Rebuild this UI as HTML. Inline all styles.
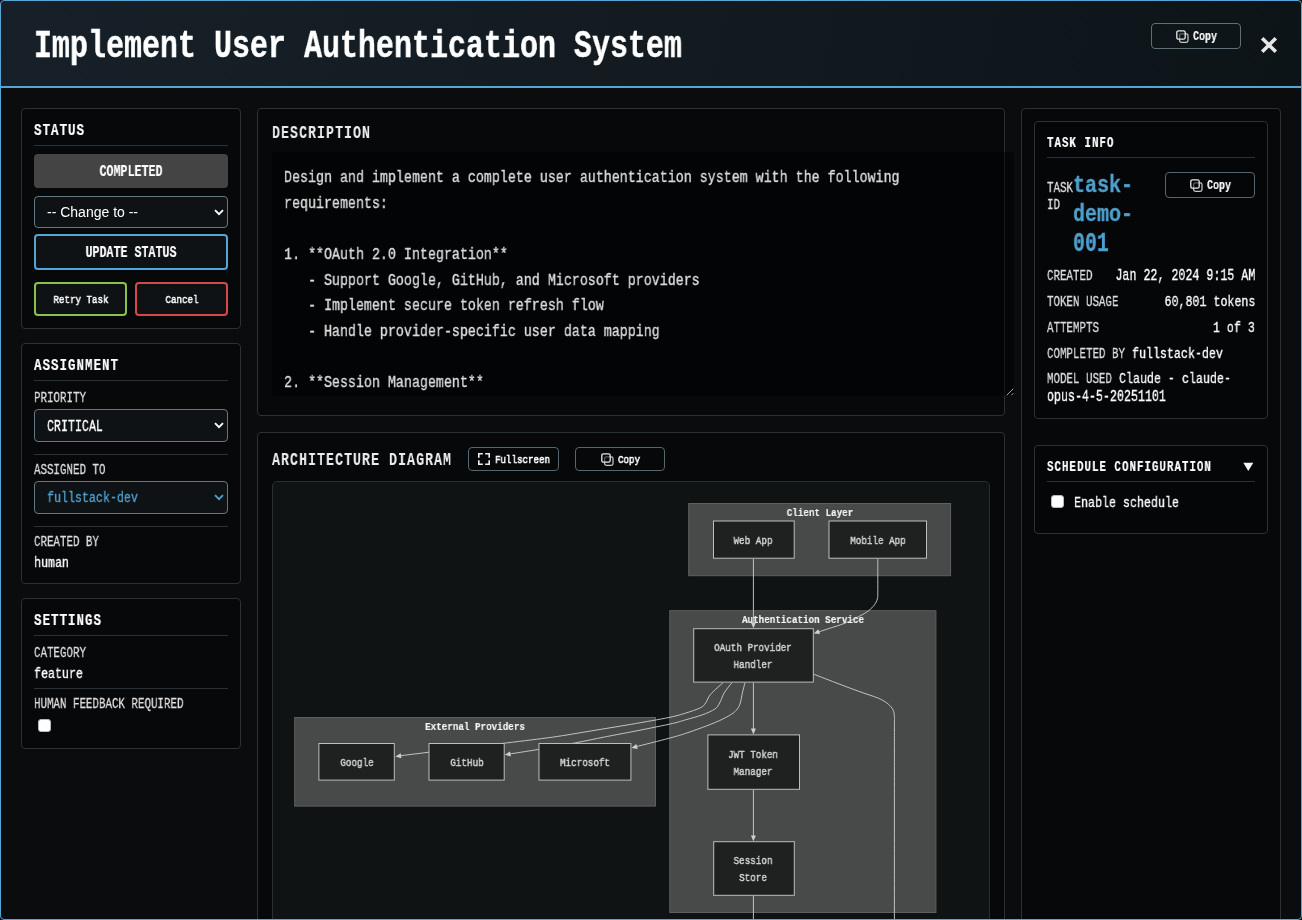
<!DOCTYPE html>
<html lang="en"><head><meta charset="utf-8"><title>Implement User Authentication System</title>
<style>
html,body{margin:0;padding:0;background:#050607;}
body{width:1302px;height:920px;overflow:hidden;position:relative;font-family:"Liberation Mono",monospace;}
#modal{position:absolute;left:0;top:0;width:1302px;height:920px;box-sizing:border-box;background:#0b0c0e;border-radius:4px;overflow:hidden;}
#frame{position:absolute;left:0;top:0;width:1302px;height:920px;box-sizing:border-box;border:1px solid #55a6d4;border-radius:4px;pointer-events:none;}
.b{position:absolute;display:block;}
.t{position:absolute;display:block;white-space:pre;font-family:"Liberation Mono",monospace;will-change:transform;}
.s{position:absolute;will-change:transform;font-family:"Liberation Sans",sans-serif;font-size:14px;line-height:16px;color:#fff;white-space:pre;}
</style></head><body>
<div id="modal">
<div class="b" style="left:1px;top:1px;width:1300px;height:85px;background:linear-gradient(100deg,#172028 0%,#131b21 50%,#0d1418 100%);border-radius:3px 3px 0 0;"></div>
<div class="b" style="left:1px;top:86px;width:1300px;height:2px;background:#55a6d4;"></div>
<span class="t" style="font-size:39.24px;line-height:45px;height:45px;top:24px;color:#fff;font-weight:700;-webkit-text-stroke:0.45px #fff;left:34.00px;transform:scaleX(0.7644);transform-origin:0 0;">Implement User Authentication System</span>
<div class="b" style="left:1151px;top:23px;width:90px;height:26px;border:1px solid #5f6f78;border-radius:4px;box-sizing:border-box;"></div>
<svg class="b" style="left:1176px;top:30px" width="13" height="13" viewBox="0 0 13 13"><rect x="3.6" y="3.9" width="8.4" height="8.4" rx="1.7" fill="none" stroke="#e8e8e8" stroke-width="1.25" opacity=".85"/><rect x="0.8" y="0.8" width="8.4" height="8.4" rx="1.7" fill="#0f171b" fill-opacity=".55" stroke="#e8e8e8" stroke-width="1.3"/></svg>
<span class="t" style="font-size:12.36px;line-height:14px;height:14px;top:30px;color:#fff;font-weight:700;-webkit-text-stroke:0.17px #fff;left:1193.00px;transform:scaleX(0.8089);transform-origin:0 0;">Copy</span>
<svg class="b" style="left:1260px;top:36px" width="18" height="18" viewBox="0 0 18 18"><path d="M2.2 2.2 L15.8 15.8 M15.8 2.2 L2.2 15.8" stroke="#e6e6e6" stroke-width="3.6"/></svg>
<div class="b" style="left:21px;top:108px;width:220px;height:221px;background:#07080a;border:1px solid #293237;border-radius:4px;box-sizing:border-box;"></div>
<span class="t" style="font-size:16.74px;line-height:19px;height:19px;top:121px;color:#fff;font-weight:700;-webkit-text-stroke:0.21px #fff;letter-spacing:1.34px;left:34.00px;transform:scaleX(0.7466);transform-origin:0 0;">STATUS</span>
<div class="b" style="left:34px;top:145px;width:194px;height:1px;background:#293237"></div>
<div class="b" style="left:34px;top:154px;width:194px;height:34px;background:#444;border-radius:4px;"></div>
<span class="t" style="font-size:15.62px;line-height:18px;height:18px;top:163px;color:#fff;font-weight:700;-webkit-text-stroke:0.19px #fff;left:131.00px;transform:translateX(-50%) scaleX(0.7466);transform-origin:50% 0;">COMPLETED</span>
<div class="b" style="left:34px;top:196px;width:194px;height:32px;box-sizing:border-box;border:1px solid #66787f;border-radius:4px;background:#0e1214;"></div>
<span class="s" style="left:47px;top:204px;">-- Change to --</span>
<svg class="b" style="left:214px;top:209px" width="10" height="7" viewBox="0 0 10 7"><path d="M1 1.2 L5 5.2 L9 1.2" fill="none" stroke="#fff" stroke-width="1.9"/></svg>
<div class="b" style="left:34px;top:234px;width:194px;height:36px;box-sizing:border-box;border:2px solid #55a6d4;border-radius:4px;background:#0e1214;"></div>
<span class="t" style="font-size:15.62px;line-height:18px;height:18px;top:244px;color:#fff;font-weight:700;-webkit-text-stroke:0.19px #fff;left:131.00px;transform:translateX(-50%) scaleX(0.7466);transform-origin:50% 0;">UPDATE STATUS</span>
<div class="b" style="left:34px;top:282px;width:93px;height:34px;box-sizing:border-box;border:2px solid #8bc34a;border-radius:4px;background:#0e1214;"></div>
<span class="t" style="font-size:11.33px;line-height:12px;height:12px;top:294px;color:#fff;font-weight:400;-webkit-text-stroke:0.50px #fff;left:80.50px;transform:translateX(-50%) scaleX(0.8089);transform-origin:50% 0;">Retry Task</span>
<div class="b" style="left:135px;top:282px;width:93px;height:34px;box-sizing:border-box;border:2px solid #d9474c;border-radius:4px;background:#0e1214;"></div>
<span class="t" style="font-size:11.33px;line-height:12px;height:12px;top:294px;color:#fff;font-weight:400;-webkit-text-stroke:0.50px #fff;left:181.50px;transform:translateX(-50%) scaleX(0.8089);transform-origin:50% 0;">Cancel</span>
<div class="b" style="left:21px;top:343px;width:220px;height:241px;background:#07080a;border:1px solid #293237;border-radius:4px;box-sizing:border-box;"></div>
<span class="t" style="font-size:16.74px;line-height:19px;height:19px;top:356px;color:#fff;font-weight:700;-webkit-text-stroke:0.21px #fff;letter-spacing:1.34px;left:34.00px;transform:scaleX(0.7466);transform-origin:0 0;">ASSIGNMENT</span>
<div class="b" style="left:34px;top:380px;width:194px;height:1px;background:#293237"></div>
<span class="t" style="font-size:14.51px;line-height:16px;height:16px;top:390px;color:#dedede;font-weight:400;-webkit-text-stroke:0.28px #dedede;left:34.00px;transform:scaleX(0.7466);transform-origin:0 0;">PRIORITY</span>
<div class="b" style="left:34px;top:409px;width:194px;height:33px;box-sizing:border-box;border:1px solid #66787f;border-radius:4px;background:#0e1214;"></div>
<span class="t" style="font-size:15.62px;line-height:18px;height:18px;top:418px;color:#fff;font-weight:400;-webkit-text-stroke:0.31px #fff;left:47.00px;transform:scaleX(0.7466);transform-origin:0 0;">CRITICAL</span>
<svg class="b" style="left:214px;top:422px" width="10" height="7" viewBox="0 0 10 7"><path d="M1 1.2 L5 5.2 L9 1.2" fill="none" stroke="#fff" stroke-width="1.9"/></svg>
<div class="b" style="left:34px;top:454px;width:194px;height:1px;background:#293237"></div>
<span class="t" style="font-size:14.51px;line-height:16px;height:16px;top:462px;color:#dedede;font-weight:400;-webkit-text-stroke:0.28px #dedede;left:34.00px;transform:scaleX(0.7466);transform-origin:0 0;">ASSIGNED TO</span>
<div class="b" style="left:34px;top:481px;width:194px;height:33px;box-sizing:border-box;border:1px solid #66787f;border-radius:4px;background:#0e1214;"></div>
<span class="t" style="font-size:14.42px;line-height:16px;height:16px;top:490px;color:#4f9fcc;font-weight:400;-webkit-text-stroke:0.31px #4f9fcc;left:47.00px;transform:scaleX(0.8089);transform-origin:0 0;">fullstack-dev</span>
<svg class="b" style="left:214px;top:494px" width="10" height="7" viewBox="0 0 10 7"><path d="M1 1.2 L5 5.2 L9 1.2" fill="none" stroke="#4f9fcc" stroke-width="1.9"/></svg>
<div class="b" style="left:34px;top:526px;width:194px;height:1px;background:#293237"></div>
<span class="t" style="font-size:14.51px;line-height:16px;height:16px;top:534px;color:#dedede;font-weight:400;-webkit-text-stroke:0.28px #dedede;left:34.00px;transform:scaleX(0.7466);transform-origin:0 0;">CREATED BY</span>
<span class="t" style="font-size:14.42px;line-height:16px;height:16px;top:555px;color:#fff;font-weight:400;-webkit-text-stroke:0.31px #fff;left:34.00px;transform:scaleX(0.8089);transform-origin:0 0;">human</span>
<div class="b" style="left:21px;top:598px;width:220px;height:151px;background:#07080a;border:1px solid #293237;border-radius:4px;box-sizing:border-box;"></div>
<span class="t" style="font-size:16.74px;line-height:19px;height:19px;top:611px;color:#fff;font-weight:700;-webkit-text-stroke:0.21px #fff;letter-spacing:1.34px;left:34.00px;transform:scaleX(0.7466);transform-origin:0 0;">SETTINGS</span>
<div class="b" style="left:34px;top:635px;width:194px;height:1px;background:#293237"></div>
<span class="t" style="font-size:14.51px;line-height:16px;height:16px;top:645px;color:#dedede;font-weight:400;-webkit-text-stroke:0.28px #dedede;left:34.00px;transform:scaleX(0.7466);transform-origin:0 0;">CATEGORY</span>
<span class="t" style="font-size:14.42px;line-height:16px;height:16px;top:666px;color:#fff;font-weight:400;-webkit-text-stroke:0.31px #fff;left:34.00px;transform:scaleX(0.8089);transform-origin:0 0;">feature</span>
<div class="b" style="left:34px;top:688px;width:194px;height:1px;background:#293237"></div>
<span class="t" style="font-size:14.51px;line-height:16px;height:16px;top:696px;color:#dedede;font-weight:400;-webkit-text-stroke:0.28px #dedede;left:34.00px;transform:scaleX(0.7466);transform-origin:0 0;">HUMAN FEEDBACK REQUIRED</span>
<div class="b" style="left:38px;top:719px;width:13px;height:13px;box-sizing:border-box;background:#fff;border:1px solid #b9b9b9;border-radius:3px;"></div>
<div class="b" style="left:257px;top:108px;width:748px;height:308px;background:#07080a;border:1px solid #293237;border-radius:4px;box-sizing:border-box;"></div>
<span class="t" style="font-size:17.86px;line-height:20px;height:20px;top:123px;color:#ececec;font-weight:700;-webkit-text-stroke:0.05px #ececec;letter-spacing:1.34px;left:272.00px;transform:scaleX(0.7466);transform-origin:0 0;">DESCRIPTION</span>
<div class="b" style="left:272px;top:152px;width:742px;height:244px;background:rgba(0,0,0,.5);border-radius:3px;"></div>
<span class="t" style="font-size:16.48px;line-height:19px;height:19px;top:168px;color:#dcdcdc;font-weight:400;-webkit-text-stroke:0.35px #dcdcdc;left:284.00px;transform:scaleX(0.8089);transform-origin:0 0;white-space:pre;">Design and implement a complete user authentication system with the following</span>
<span class="t" style="font-size:16.48px;line-height:19px;height:19px;top:194px;color:#dcdcdc;font-weight:400;-webkit-text-stroke:0.35px #dcdcdc;left:284.00px;transform:scaleX(0.8089);transform-origin:0 0;white-space:pre;">requirements:</span>
<span class="t" style="font-size:16.48px;line-height:19px;height:19px;top:245px;color:#dcdcdc;font-weight:400;-webkit-text-stroke:0.35px #dcdcdc;left:284.00px;transform:scaleX(0.8089);transform-origin:0 0;white-space:pre;">1. **OAuth 2.0 Integration**</span>
<span class="t" style="font-size:16.48px;line-height:19px;height:19px;top:271px;color:#dcdcdc;font-weight:400;-webkit-text-stroke:0.35px #dcdcdc;left:284.00px;transform:scaleX(0.8089);transform-origin:0 0;white-space:pre;">   - Support Google, GitHub, and Microsoft providers</span>
<span class="t" style="font-size:16.48px;line-height:19px;height:19px;top:296px;color:#dcdcdc;font-weight:400;-webkit-text-stroke:0.35px #dcdcdc;left:284.00px;transform:scaleX(0.8089);transform-origin:0 0;white-space:pre;">   - Implement secure token refresh flow</span>
<span class="t" style="font-size:16.48px;line-height:19px;height:19px;top:322px;color:#dcdcdc;font-weight:400;-webkit-text-stroke:0.35px #dcdcdc;left:284.00px;transform:scaleX(0.8089);transform-origin:0 0;white-space:pre;">   - Handle provider-specific user data mapping</span>
<span class="t" style="font-size:16.48px;line-height:19px;height:19px;top:373px;color:#dcdcdc;font-weight:400;-webkit-text-stroke:0.35px #dcdcdc;left:284.00px;transform:scaleX(0.8089);transform-origin:0 0;white-space:pre;">2. **Session Management**</span>
<svg class="b" style="left:1004px;top:386px" width="10" height="10" viewBox="0 0 10 10"><path d="M2.7 9.3 L9.3 2.7 M7.3 9.3 L9.3 7.3" stroke="#b4b4b4" stroke-width="0.9"/></svg>
<div class="b" style="left:257px;top:432px;width:748px;height:600px;background:#07080a;border:1px solid #293237;border-radius:4px;box-sizing:border-box;"></div>
<span class="t" style="font-size:17.86px;line-height:20px;height:20px;top:450px;color:#ececec;font-weight:700;-webkit-text-stroke:0.05px #ececec;letter-spacing:1.34px;left:272.00px;transform:scaleX(0.7466);transform-origin:0 0;">ARCHITECTURE DIAGRAM</span>
<div class="b" style="left:468px;top:447px;width:91px;height:24px;box-sizing:border-box;border:1px solid #56666e;border-radius:4px;background:#07080a;"></div>
<svg class="b" style="left:478px;top:453px" width="12" height="12" viewBox="0 0 12 12"><path d="M0.8 4.8 V0.8 H4.8 M7.2 0.8 H11.2 V4.8 M11.2 7.2 V11.2 H7.2 M4.8 11.2 H0.8 V7.2" fill="none" stroke="#f0f0f0" stroke-width="1.6"/></svg>
<span class="t" style="font-size:11.33px;line-height:12px;height:12px;top:454px;color:#fff;font-weight:400;-webkit-text-stroke:0.60px #fff;left:495.00px;transform:scaleX(0.8089);transform-origin:0 0;">Fullscreen</span>
<div class="b" style="left:575px;top:447px;width:90px;height:24px;box-sizing:border-box;border:1px solid #56666e;border-radius:4px;background:#07080a;"></div>
<svg class="b" style="left:601px;top:453px" width="13" height="13" viewBox="0 0 13 13"><rect x="3.6" y="3.9" width="8.4" height="8.4" rx="1.7" fill="none" stroke="#e8e8e8" stroke-width="1.25" opacity=".85"/><rect x="0.8" y="0.8" width="8.4" height="8.4" rx="1.7" fill="#07080a" fill-opacity=".55" stroke="#e8e8e8" stroke-width="1.3"/></svg>
<span class="t" style="font-size:11.33px;line-height:12px;height:12px;top:454px;color:#fff;font-weight:400;-webkit-text-stroke:0.60px #fff;left:617.50px;transform:scaleX(0.8089);transform-origin:0 0;">Copy</span>
<div class="b" style="left:272px;top:481px;width:718px;height:500px;box-sizing:border-box;background:#0f1314;border:1px solid #283035;border-radius:5px;"></div>
<div class="b" style="left:1021px;top:108px;width:260px;height:900px;background:#07080a;border:1px solid #293237;border-radius:4px;box-sizing:border-box;"></div>
<div class="b" style="left:1034px;top:121px;width:234px;height:298px;background:#07080a;border:1px solid #293237;border-radius:4px;box-sizing:border-box;background:#050607;"></div>
<span class="t" style="font-size:14.51px;line-height:16px;height:16px;top:135px;color:#fff;font-weight:700;-webkit-text-stroke:0.18px #fff;letter-spacing:1.34px;left:1047.00px;transform:scaleX(0.7466);transform-origin:0 0;">TASK INFO</span>
<div class="b" style="left:1047px;top:157px;width:208px;height:1px;background:#293237"></div>
<span class="t" style="font-size:14.51px;line-height:16px;height:16px;top:180px;color:#dedede;font-weight:400;-webkit-text-stroke:0.28px #dedede;left:1047.00px;transform:scaleX(0.7466);transform-origin:0 0;">TASK</span>
<span class="t" style="font-size:14.51px;line-height:16px;height:16px;top:197px;color:#dedede;font-weight:400;-webkit-text-stroke:0.28px #dedede;left:1047.00px;transform:scaleX(0.7466);transform-origin:0 0;">ID</span>
<span class="t" style="font-size:24.72px;line-height:28px;height:28px;top:171px;color:#4f9fcc;font-weight:700;-webkit-text-stroke:0.33px #4f9fcc;left:1073.00px;transform:scaleX(0.8089);transform-origin:0 0;">task-</span>
<span class="t" style="font-size:24.72px;line-height:28px;height:28px;top:200px;color:#4f9fcc;font-weight:700;-webkit-text-stroke:0.33px #4f9fcc;left:1073.00px;transform:scaleX(0.8089);transform-origin:0 0;">demo-</span>
<span class="t" style="font-size:26.78px;line-height:30px;height:30px;top:229px;color:#4f9fcc;font-weight:700;-webkit-text-stroke:0.33px #4f9fcc;left:1073.00px;transform:scaleX(0.7466);transform-origin:0 0;">001</span>
<div class="b" style="left:1165px;top:172px;width:90px;height:26px;box-sizing:border-box;border:1px solid #56666e;border-radius:4px;background:#07080a;background:#050607;"></div>
<svg class="b" style="left:1190px;top:179px" width="13" height="13" viewBox="0 0 13 13"><rect x="3.6" y="3.9" width="8.4" height="8.4" rx="1.7" fill="none" stroke="#e8e8e8" stroke-width="1.25" opacity=".85"/><rect x="0.8" y="0.8" width="8.4" height="8.4" rx="1.7" fill="#050607" fill-opacity=".55" stroke="#e8e8e8" stroke-width="1.3"/></svg>
<span class="t" style="font-size:12.36px;line-height:14px;height:14px;top:179px;color:#fff;font-weight:700;-webkit-text-stroke:0.17px #fff;left:1207.00px;transform:scaleX(0.8089);transform-origin:0 0;">Copy</span>
<span class="t" style="font-size:14.51px;line-height:16px;height:16px;top:268px;color:#dedede;font-weight:400;-webkit-text-stroke:0.28px #dedede;left:1047.00px;transform:scaleX(0.7466);transform-origin:0 0;">CREATED</span>
<span class="t" style="font-size:15.62px;line-height:18px;height:18px;top:267px;color:#fff;font-weight:400;-webkit-text-stroke:0.31px #fff;right:47.00px;transform:scaleX(0.7466);transform-origin:100% 0;">Jan 22, 2024 9:15 AM</span>
<span class="t" style="font-size:14.51px;line-height:16px;height:16px;top:294px;color:#dedede;font-weight:400;-webkit-text-stroke:0.28px #dedede;left:1047.00px;transform:scaleX(0.7466);transform-origin:0 0;">TOKEN USAGE</span>
<span class="t" style="font-size:14.42px;line-height:16px;height:16px;top:294px;color:#fff;font-weight:400;-webkit-text-stroke:0.31px #fff;right:47.00px;transform:scaleX(0.8089);transform-origin:100% 0;">60,801 tokens</span>
<span class="t" style="font-size:14.51px;line-height:16px;height:16px;top:320px;color:#dedede;font-weight:400;-webkit-text-stroke:0.28px #dedede;left:1047.00px;transform:scaleX(0.7466);transform-origin:0 0;">ATTEMPTS</span>
<span class="t" style="font-size:14.42px;line-height:16px;height:16px;top:320px;color:#fff;font-weight:400;-webkit-text-stroke:0.31px #fff;right:47.00px;transform:scaleX(0.8089);transform-origin:100% 0;">1 of 3</span>
<span class="t" style="font-size:14.51px;line-height:16px;height:16px;top:346px;color:#dedede;font-weight:400;-webkit-text-stroke:0.28px #dedede;left:1047.00px;transform:scaleX(0.7466);transform-origin:0 0;">COMPLETED BY</span>
<span class="t" style="font-size:14.42px;line-height:16px;height:16px;top:346px;color:#fff;font-weight:400;-webkit-text-stroke:0.31px #fff;left:1132.00px;transform:scaleX(0.8089);transform-origin:0 0;">fullstack-dev</span>
<span class="t" style="font-size:14.51px;line-height:16px;height:16px;top:371px;color:#dedede;font-weight:400;-webkit-text-stroke:0.28px #dedede;left:1047.00px;transform:scaleX(0.7466);transform-origin:0 0;">MODEL USED</span>
<span class="t" style="font-size:14.42px;line-height:16px;height:16px;top:371px;color:#fff;font-weight:400;-webkit-text-stroke:0.31px #fff;left:1119.00px;transform:scaleX(0.8089);transform-origin:0 0;">Claude - claude-</span>
<span class="t" style="font-size:15.62px;line-height:18px;height:18px;top:388px;color:#fff;font-weight:400;-webkit-text-stroke:0.31px #fff;left:1047.00px;transform:scaleX(0.7466);transform-origin:0 0;">opus-4-5-20251101</span>
<div class="b" style="left:1034px;top:445px;width:234px;height:89px;background:#07080a;border:1px solid #293237;border-radius:4px;box-sizing:border-box;background:#050607;"></div>
<span class="t" style="font-size:14.51px;line-height:16px;height:16px;top:459px;color:#fff;font-weight:700;-webkit-text-stroke:0.18px #fff;letter-spacing:1.34px;left:1047.00px;transform:scaleX(0.7466);transform-origin:0 0;">SCHEDULE CONFIGURATION</span>
<svg class="b" style="left:1243px;top:462px" width="11" height="10" viewBox="0 0 11 10"><path d="M0.3 0.8 H10.3 L5.3 9 Z" fill="#f4f4f4"/></svg>
<div class="b" style="left:1047px;top:481px;width:208px;height:1px;background:#293237"></div>
<div class="b" style="left:1051px;top:495px;width:13px;height:13px;box-sizing:border-box;background:#fff;border:1px solid #b9b9b9;border-radius:3px;"></div>
<span class="t" style="font-size:14.42px;line-height:16px;height:16px;top:495px;color:#fff;font-weight:400;-webkit-text-stroke:0.31px #fff;left:1074.00px;transform:scaleX(0.8089);transform-origin:0 0;">Enable schedule</span>
<svg class="b" style="left:273px;top:482px;" width="716" height="438" viewBox="273 482 716 438"><rect x="688.7" y="503.5" width="261.9" height="72.2" fill="#484a49" stroke="#5e605f" stroke-width="1"/><rect x="669.8" y="610.7" width="266.1" height="301.8" fill="#484a49" stroke="#5e605f" stroke-width="1"/><rect x="294.7" y="717.5" width="360.8" height="88.6" fill="#484a49" stroke="#5e605f" stroke-width="1"/><path d="M753.4,558.7 L753.4,626" fill="none" stroke="#cfcfcf" stroke-width="0.9"/><path d="M877.8,558.4 C877.8,561.2 877.8,569.4 877.8,575.0 C877.8,580.6 877.9,588.2 877.8,592.2 C877.7,596.2 877.9,596.9 877.3,599.0 C876.7,601.1 875.9,602.9 874.4,604.9 C872.9,606.9 871.1,608.8 868.5,610.8 C865.9,612.8 862.8,614.5 858.7,616.6 C854.6,618.7 848.9,621.5 844.0,623.5 C839.1,625.5 833.6,627.0 829.4,628.4 C825.1,629.8 820.3,631.4 818.5,632.0" fill="none" stroke="#cfcfcf" stroke-width="0.9"/><path d="M813.6,674.2 C817.9,675.8 831.6,681.1 839.1,684.0 C846.6,686.9 852.2,688.9 858.7,691.3 C865.2,693.7 873.4,696.1 878.3,698.2 C883.2,700.3 885.6,702.0 888.1,704.0 C890.6,706.0 892.0,707.8 893.0,709.9 C894.0,712.0 894.2,713.4 894.4,716.8 C894.6,720.1 894.4,716.1 894.4,730.0 C894.4,743.9 894.4,765.0 894.4,800.0 C894.4,835.0 894.4,916.7 894.4,940.0" fill="none" stroke="#cfcfcf" stroke-width="0.9"/><path d="M753.4,682.6 L753.4,732" fill="none" stroke="#cfcfcf" stroke-width="0.9"/><path d="M753.4,789.8 L753.4,839" fill="none" stroke="#cfcfcf" stroke-width="0.9"/><path d="M753.4,895.8 L753.4,940" fill="none" stroke="#cfcfcf" stroke-width="0.9"/><path d="M722.9,682.8 C720.9,684.7 713.6,690.8 710.7,694.2 C707.8,697.6 707.3,700.8 705.6,703.0 C703.9,705.2 704.0,706.0 700.6,707.7 C697.2,709.4 690.5,711.6 685.3,713.2 C680.1,714.8 678.4,715.5 669.3,717.4 C660.2,719.3 643.6,722.1 630.6,724.4 C617.6,726.6 604.5,728.8 591.4,730.9 C578.3,733.0 566.6,735.2 552.2,737.2 C537.8,739.2 525.7,740.6 505.2,743.1 C484.7,745.6 446.7,750.1 429.2,752.2 C411.7,754.3 404.9,755.2 400.0,755.8" fill="none" stroke="#cfcfcf" stroke-width="0.9"/><path d="M731.8,682.8 C730.5,684.5 726.2,689.5 724.2,692.9 C722.2,696.3 721.2,700.3 719.6,703.0 C718.0,705.7 717.8,707.0 714.9,709.0 C712.0,711.0 707.1,713.1 702.2,714.9 C697.3,716.7 690.8,718.3 685.3,719.9 C679.8,721.5 678.4,722.2 669.3,724.2 C660.2,726.2 641.4,729.9 630.6,732.0 C619.8,734.1 613.6,735.2 604.5,737.0 C595.4,738.8 586.7,740.7 575.7,742.8 C564.7,744.9 549.5,747.5 538.5,749.4 C527.5,751.3 514.3,753.2 509.5,754.0" fill="none" stroke="#cfcfcf" stroke-width="0.9"/><path d="M744.9,682.8 C744.5,684.5 743.2,689.5 742.4,692.9 C741.6,696.3 741.1,700.3 740.3,703.0 C739.4,705.7 738.7,707.2 737.3,709.0 C735.9,710.8 734.8,712.0 731.8,714.0 C728.8,716.0 724.0,718.5 719.1,720.8 C714.2,723.0 707.8,725.4 702.2,727.5 C696.6,729.6 690.8,731.7 685.3,733.5 C679.8,735.3 677.5,736.0 669.3,738.2 C661.1,740.4 641.5,745.3 636.0,746.7" fill="none" stroke="#cfcfcf" stroke-width="0.9"/><path d="M753.4,628.3 L750.9,622.5 L755.9,622.5 Z" fill="#cfcfcf"/><path d="M813.7,633.4 L818.4,629.2 L820.0,634.0 Z" fill="#cfcfcf"/><path d="M753.4,734.4 L750.9,728.6 L755.9,728.6 Z" fill="#cfcfcf"/><path d="M753.4,841.2 L750.9,835.4 L755.9,835.4 Z" fill="#cfcfcf"/><path d="M395.3,756.4 L400.8,753.2 L401.4,758.2 Z" fill="#cfcfcf"/><path d="M504.8,754.8 L510.1,751.4 L510.9,756.4 Z" fill="#cfcfcf"/><path d="M631.4,748.0 L636.3,744.0 L637.7,748.9 Z" fill="#cfcfcf"/><rect x="713.5" y="521.0" width="80.7" height="37.2" fill="#1f2120" stroke="#bdbdbd" stroke-width="1"/><rect x="829.0" y="521.0" width="97.5" height="37.2" fill="#1f2120" stroke="#bdbdbd" stroke-width="1"/><rect x="693.7" y="628.7" width="119.6" height="53.4" fill="#1f2120" stroke="#bdbdbd" stroke-width="1"/><rect x="707.9" y="734.9" width="91.6" height="54.4" fill="#1f2120" stroke="#bdbdbd" stroke-width="1"/><rect x="713.7" y="841.7" width="80.6" height="53.6" fill="#1f2120" stroke="#bdbdbd" stroke-width="1"/><rect x="318.9" y="743.5" width="75.4" height="36.6" fill="#1f2120" stroke="#bdbdbd" stroke-width="1"/><rect x="429.0" y="743.5" width="75.2" height="36.6" fill="#1f2120" stroke="#bdbdbd" stroke-width="1"/><rect x="539.0" y="743.5" width="91.9" height="36.6" fill="#1f2120" stroke="#bdbdbd" stroke-width="1"/></svg>
<span class="t" style="font-size:11.43px;line-height:13px;height:13px;top:506px;color:#f4f6f5;font-weight:700;-webkit-text-stroke:0.15px #f4f6f5;left:819.50px;transform:translateX(-50%) scaleX(0.8089);transform-origin:50% 0;">Client Layer</span>
<span class="t" style="font-size:11.43px;line-height:13px;height:13px;top:613px;color:#f4f6f5;font-weight:700;-webkit-text-stroke:0.15px #f4f6f5;left:803.00px;transform:translateX(-50%) scaleX(0.8089);transform-origin:50% 0;">Authentication Service</span>
<span class="t" style="font-size:11.43px;line-height:13px;height:13px;top:720px;color:#f4f6f5;font-weight:700;-webkit-text-stroke:0.15px #f4f6f5;left:475.00px;transform:translateX(-50%) scaleX(0.8089);transform-origin:50% 0;">External Providers</span>
<span class="t" style="font-size:11.43px;line-height:13px;height:13px;top:534px;color:#d4d4d4;font-weight:400;-webkit-text-stroke:0.45px #d4d4d4;left:753.40px;transform:translateX(-50%) scaleX(0.8089);transform-origin:50% 0;">Web App</span>
<span class="t" style="font-size:11.43px;line-height:13px;height:13px;top:534px;color:#d4d4d4;font-weight:400;-webkit-text-stroke:0.45px #d4d4d4;left:877.70px;transform:translateX(-50%) scaleX(0.8089);transform-origin:50% 0;">Mobile App</span>
<span class="t" style="font-size:11.43px;line-height:13px;height:13px;top:641px;color:#d4d4d4;font-weight:400;-webkit-text-stroke:0.45px #d4d4d4;left:753.40px;transform:translateX(-50%) scaleX(0.8089);transform-origin:50% 0;">OAuth Provider</span>
<span class="t" style="font-size:11.43px;line-height:13px;height:13px;top:658px;color:#d4d4d4;font-weight:400;-webkit-text-stroke:0.45px #d4d4d4;left:753.40px;transform:translateX(-50%) scaleX(0.8089);transform-origin:50% 0;">Handler</span>
<span class="t" style="font-size:11.43px;line-height:13px;height:13px;top:748px;color:#d4d4d4;font-weight:400;-webkit-text-stroke:0.45px #d4d4d4;left:753.40px;transform:translateX(-50%) scaleX(0.8089);transform-origin:50% 0;">JWT Token</span>
<span class="t" style="font-size:11.43px;line-height:13px;height:13px;top:765px;color:#d4d4d4;font-weight:400;-webkit-text-stroke:0.45px #d4d4d4;left:753.40px;transform:translateX(-50%) scaleX(0.8089);transform-origin:50% 0;">Manager</span>
<span class="t" style="font-size:11.43px;line-height:13px;height:13px;top:854px;color:#d4d4d4;font-weight:400;-webkit-text-stroke:0.45px #d4d4d4;left:753.40px;transform:translateX(-50%) scaleX(0.8089);transform-origin:50% 0;">Session</span>
<span class="t" style="font-size:11.43px;line-height:13px;height:13px;top:871px;color:#d4d4d4;font-weight:400;-webkit-text-stroke:0.45px #d4d4d4;left:753.40px;transform:translateX(-50%) scaleX(0.8089);transform-origin:50% 0;">Store</span>
<span class="t" style="font-size:11.43px;line-height:13px;height:13px;top:756px;color:#d4d4d4;font-weight:400;-webkit-text-stroke:0.45px #d4d4d4;left:356.60px;transform:translateX(-50%) scaleX(0.8089);transform-origin:50% 0;">Google</span>
<span class="t" style="font-size:11.43px;line-height:13px;height:13px;top:756px;color:#d4d4d4;font-weight:400;-webkit-text-stroke:0.45px #d4d4d4;left:466.60px;transform:translateX(-50%) scaleX(0.8089);transform-origin:50% 0;">GitHub</span>
<span class="t" style="font-size:11.43px;line-height:13px;height:13px;top:756px;color:#d4d4d4;font-weight:400;-webkit-text-stroke:0.45px #d4d4d4;left:585.00px;transform:translateX(-50%) scaleX(0.8089);transform-origin:50% 0;">Microsoft</span>
</div>
<div id="frame"></div>
</body></html>
